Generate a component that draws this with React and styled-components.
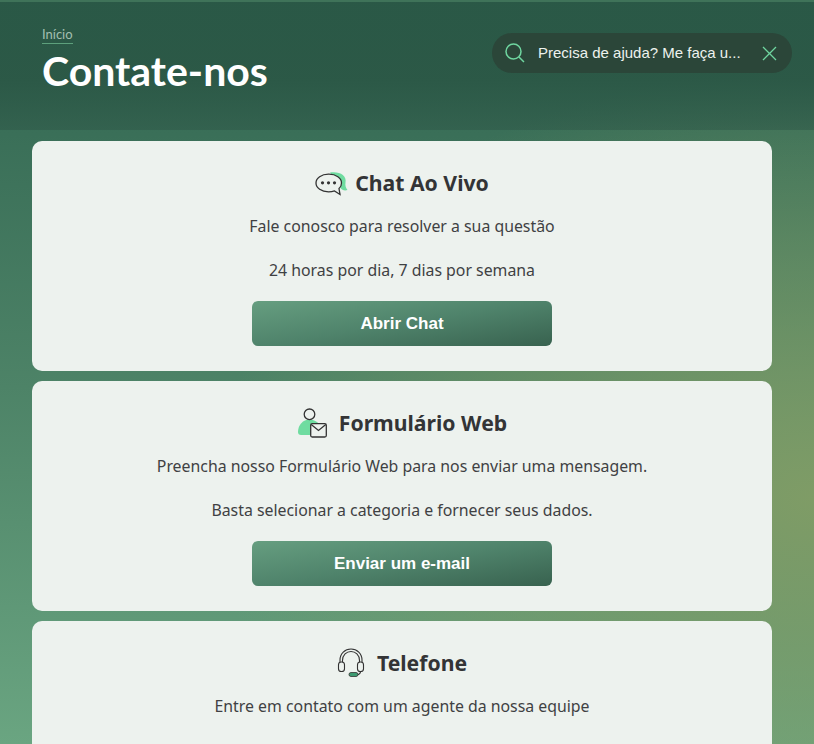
import React from "react";
import styled, { createGlobalStyle } from "styled-components";

const GlobalStyle = createGlobalStyle`
  html, body {
    margin: 0;
    padding: 0;
    height: 100%;
    overflow: hidden;
  }
  body {
    font-family: "Noto Sans", sans-serif;
  }
`;

const Page = styled.div`
  height: 744px;
  overflow: hidden;
  background:
    radial-gradient(ellipse 600px 430px at 100% 67%, #7f9c66 0, rgba(127, 156, 102, 0) 100%),
    linear-gradient(180deg, #2f6a52 0, #3a6f58 18%, #4d8367 52%, #6aa581 100%);
`;

const Header = styled.header`
  height: 128px;
  border-top: 2px solid #3f7359;
  display: flex;
  justify-content: space-between;
  padding: 0 22px 0 42px;
  background: linear-gradient(180deg, rgba(42, 88, 70, 0.98) 0, rgba(42, 85, 68, 0.85) 60%, rgba(45, 85, 70, 0.5) 100%);
`;

const TitleBlock = styled.div`
  padding-top: 20px;
`;

const Crumb = styled.a`
  display: inline-block;
  font-family: "Lato", sans-serif;
  font-size: 13px;
  line-height: 17px;
  color: #a2bfb0;
  border-bottom: 1px solid #5da07c;
`;

const Title = styled.h1`
  margin: 2px 0 0;
  font-family: "Lato", sans-serif;
  font-size: 41px;
  line-height: 50px;
  font-weight: 700;
  color: #fff;
`;

const SearchBar = styled.div`
  margin-top: 31px;
  width: 300px;
  height: 40px;
  box-sizing: border-box;
  padding: 0 15px 0 13px;
  border-radius: 20px;
  background: #2b4639;
  display: flex;
  align-items: center;
  color: #6fd6a0;
`;

const SearchText = styled.span`
  flex: 1;
  margin: -2px 0 0 13px;
  font-family: "Liberation Sans", sans-serif;
  font-size: 15px;
  color: #edf2ee;
  white-space: nowrap;
`;

const CardList = styled.main`
  display: flex;
  flex-direction: column;
  gap: 10px;
  padding: 11px 42px 0 32px;
`;

const Card = styled.section`
  height: 230px;
  flex-shrink: 0;
  box-sizing: border-box;
  padding-top: 26px;
  border-radius: 10px;
  background: #edf2ee;
  display: flex;
  flex-direction: column;
  align-items: center;
`;

const CardHead = styled.div`
  display: flex;
  align-items: center;
  gap: ${(props) => props.$gap}px;
  height: 32px;
`;

const CardTitle = styled.h2`
  margin: 0;
  font-size: 21.2px;
  line-height: 32px;
  font-weight: 700;
  color: #333436;
`;

const CardText = styled.p`
  margin: 22px 0 0;
  font-size: 15.85px;
  line-height: 22px;
  height: 22px;
  color: #3f4143;
  &:nth-of-type(1) {
    margin-top: 16px;
  }
`;

const ActionButton = styled.button`
  margin-top: 20px;
  width: 300px;
  height: 45px;
  flex-shrink: 0;
  border: none;
  border-radius: 6px;
  background: linear-gradient(171deg, #669e80 0, #4f836b 50%, #38624f 100%);
  color: #fff;
  font-family: "Liberation Sans", sans-serif;
  font-size: 17px;
  font-weight: 700;
`;

const SearchIcon = () => (
  <svg width="20" height="20" viewBox="0 0 20 20" fill="none" stroke="currentColor" strokeWidth="1.5">
    <circle cx="8.5" cy="8.5" r="7.5" />
    <path d="M14 14l5 5" />
  </svg>
);

const CloseIcon = () => (
  <svg width="15" height="15" viewBox="0 0 15 15" fill="none" stroke="currentColor" strokeWidth="1.3">
    <path d="M1 1l13 13M14 1L1 14" />
  </svg>
);

const ChatIcon = () => (
  <svg width="33" height="25" viewBox="0 0 33 25" fill="none">
    <path d="M15 1.500C24 0 32 4 30.500 11.500c-.6 3 .5 5.500 2 7.500-3 1-5.500 0-7-2z" fill="#6fdca0" />
    <path d="M13.500 3.200C6.500 3.200 1 7 1 12s5.500 8.800 12.500 8.800c2.600 0 4.300-.3 6-.9l5.500 3.600-1-6c2-1.500 2.500-3.500 2.500-5.500 0-5-5.500-8.800-12.500-8.800z" fill="#edf2ee" stroke="#333" strokeWidth="1.300" />
    <circle cx="7.500" cy="11.800" r="1.600" fill="#333" />
    <circle cx="13.500" cy="11.800" r="1.600" fill="#333" />
    <circle cx="19.500" cy="11.800" r="1.600" fill="#333" />
  </svg>
);

const FormIcon = () => (
  <svg width="30" height="30" viewBox="0 0 30 30" fill="none">
    <path d="M1 24C1 17 6 11.500 12.500 11.500c4.500 0 8.500 2.500 10.500 6L14 27H4c-2 0-3-1-3-3z" fill="#6fdca0" />
    <circle cx="12.500" cy="6.300" r="5.300" fill="#edf2ee" stroke="#333" strokeWidth="1.300" />
    <rect x="13.700" y="15.700" width="15.600" height="13.300" rx="1.500" fill="#edf2ee" stroke="#333" strokeWidth="1.300" />
    <path d="M14.200 16.500l7.300 6 7.300-6" stroke="#333" strokeWidth="1.300" />
  </svg>
);

const HeadsetIcon = () => (
  <svg width="28" height="30" viewBox="0 0 28 30" fill="none" stroke="#333" strokeWidth="1.100">
    <path d="M3 15V12C3 5.500 8 1 14 1s11 4.500 11 11v3" />
    <path d="M5.500 15V12.500C5.500 7 9.500 3.500 14 3.500s8.500 3.500 8.500 9V15" />
    <rect x="1.500" y="14" width="6" height="9.500" rx="2.800" fill="#edf2ee" />
    <rect x="20.500" y="14" width="6" height="9.500" rx="2.800" fill="#edf2ee" />
    <path d="M23.500 23.500c0 2-1.500 3-3.500 3.300" />
    <rect x="12" y="24.500" width="9" height="4" rx="2" fill="#3c9a70" strokeWidth="0.800" />
  </svg>
);

const cards = [
  {
    title: "Chat Ao Vivo",
    icon: <ChatIcon />,
    gap: 7,
    lines: ["Fale conosco para resolver a sua questão", "24 horas por dia, 7 dias por semana"],
    action: "Abrir Chat",
  },
  {
    title: "Formulário Web",
    icon: <FormIcon />,
    gap: 12,
    lines: [
      "Preencha nosso Formulário Web para nos enviar uma mensagem.",
      "Basta selecionar a categoria e fornecer seus dados.",
    ],
    action: "Enviar um e-mail",
  },
  {
    title: "Telefone",
    icon: <HeadsetIcon />,
    gap: 12,
    lines: ["Entre em contato com um agente da nossa equipe"],
  },
];

const App = () => {
  return (
    <Page>
      <GlobalStyle />
      <Header>
        <TitleBlock>
          <Crumb>Início</Crumb>
          <Title>Contate-nos</Title>
        </TitleBlock>
        <SearchBar>
          <SearchIcon />
          <SearchText>Precisa de ajuda? Me faça u...</SearchText>
          <CloseIcon />
        </SearchBar>
      </Header>
      <CardList>
        {cards.map((card) => (
          <Card key={card.title}>
            <CardHead $gap={card.gap}>
              {card.icon}
              <CardTitle>{card.title}</CardTitle>
            </CardHead>
            {card.lines.map((line) => (
              <CardText key={line}>{line}</CardText>
            ))}
            {card.action && <ActionButton>{card.action}</ActionButton>}
          </Card>
        ))}
      </CardList>
    </Page>
  );
};

export default App;
